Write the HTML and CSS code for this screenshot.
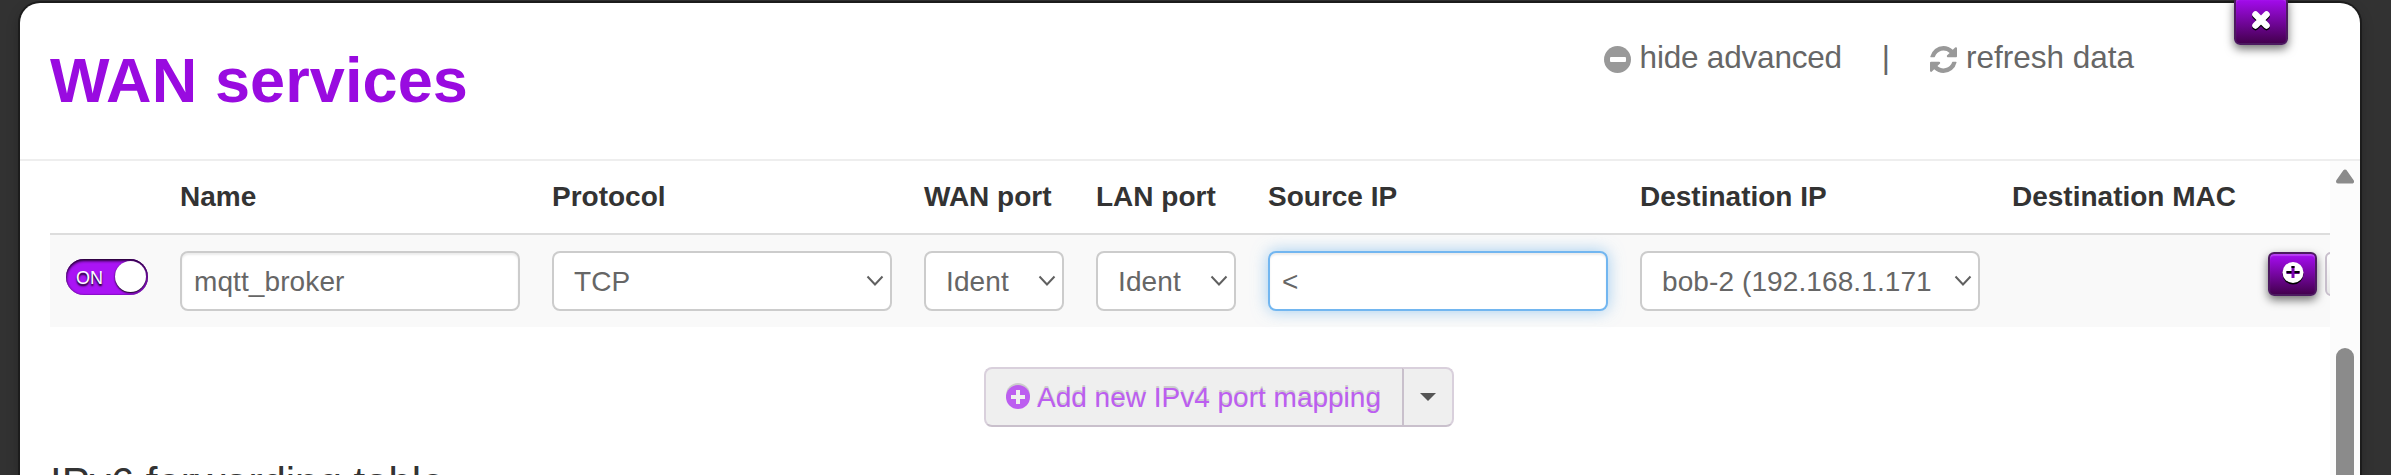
FILE: index.html
```html
<!DOCTYPE html>
<html lang="en">
<head>
<meta charset="utf-8">
<title>WAN services</title>
<link rel="stylesheet" href="styles.css">
</head>
<body>
<svg class="defs" aria-hidden="true">
  <symbol id="chevron" viewBox="0 0 18 12"><path d="M1.5 1.500 9 9.500 16.500 1.500" fill="none" stroke="#606060" stroke-width="2"/></symbol>
  <symbol id="minus" viewBox="0 0 27 27"><circle cx="13.5" cy="13.5" r="13.5" fill="#999"/><rect x="6" y="11" width="16" height="5" rx="1" fill="#fff"/></symbol>
  <symbol id="refresh" viewBox="0 0 1536 1536"><path fill="#999" d="M1511 928q0 5-1 7-64 268-268 434.500T764 1536q-146 0-282.500-55T238 1324l-129 129q-19 19-45 19t-45-19-19-45V960q0-26 19-45t45-19h448q26 0 45 19t19 45-19 45l-137 137q71 66 161 102t187 36q134 0 250-65t186-179q11-17 53-117 8-23 30-23h192q13 0 22.500 9.500t9.500 22.500zm25-800v448q0 26-19 45t-45 19h-448q-26 0-45-19t-19-45 19-45l138-138Q969 256 768 256q-134 0-250 65T332 500q-11 17-53 117-8 23-30 23H50q-13 0-22.500-9.500T18 608v-7q65-268 270-434.500T768 0q146 0 284 55.500T1297 212l130-129q19-19 45-19t45 19 19 45z"/></symbol>
</svg>
<main class="panel">
  <header class="panel-head">
    <h1 class="title">WAN services</h1>
    <div class="actions">
      <a class="action hide"><svg class="action-icon"><use href="#minus"/></svg>hide advanced</a>
      <span class="separator">|</span>
      <a class="action"><svg class="action-icon"><use href="#refresh"/></svg>refresh data</a>
    </div>
    <button class="purple close" aria-label="Close"><svg class="close-icon" viewBox="0 0 20 20"><path d="M4.500 5.500 15.500 16.500M15.500 5.500 4.500 16.500" stroke="#000"/><path d="M4.500 4 15.500 15M15.500 4 4.500 15" stroke="#fff"/></svg></button>
  </header>
  <div class="body">
    <div class="content">
      <div class="row row-head">
        <span></span><span>Name</span><span>Protocol</span><span>WAN port</span><span>LAN port</span><span>Source IP</span><span>Destination IP</span><span>Destination MAC</span>
      </div>
      <div class="row row-data">
        <div class="toggle"><span class="toggle-text">ON</span><span class="knob"></span></div>
        <div class="field input">mqtt_broker</div>
        <div class="field select"><span>TCP</span><svg class="chevron"><use href="#chevron"/></svg></div>
        <div class="field select"><span>Ident</span><svg class="chevron"><use href="#chevron"/></svg></div>
        <div class="field select"><span>Ident</span><svg class="chevron"><use href="#chevron"/></svg></div>
        <div class="field input focused">&lt;</div>
        <div class="field select"><span>bob-2 (192.168.1.171</span><svg class="chevron"><use href="#chevron"/></svg></div>
        <span></span>
        <div class="row-buttons">
          <button class="purple add" aria-label="Add"><svg class="add-icon" viewBox="0 0 22 23"><circle cx="11" cy="12" r="10.500" fill="#000"/><circle cx="11" cy="10.500" r="10.500" fill="#fff"/><path d="M4.500 9H9.500V4H12.500V9H17.500V12H12.500V16H9.500V12H4.500Z" fill="#7a06b0"/><path d="M4.500 9H9.500V11.200H4.500ZM12.500 9H17.500V11.200H12.500ZM9.500 4H12.500V6H9.500Z" fill="#000"/></svg></button>
          <button class="plain" aria-label="More"></button>
        </div>
      </div>
      <div class="mapping">
        <button class="mapping-main"><svg class="mapping-icon" viewBox="0 0 24 26"><circle cx="12" cy="12" r="12" fill="#ccc"/><circle cx="12" cy="14" r="12" fill="#bc5ef0"/><path d="M5 12H10V7H14V12H19V16H14V21H10V16H5Z" fill="#efefef"/></svg>Add new IPv4 port mapping</button>
        <button class="mapping-drop" aria-label="Options"><span class="caret"></span></button>
      </div>
      <h2 class="subtitle">IPv6 forwarding table</h2>
    </div>
    <div class="scrollbar">
      <svg class="scroll-up" viewBox="0 0 18 14"><path d="M9 2 16 12H2Z" fill="#8b8b8b" stroke="#8b8b8b" stroke-width="4" stroke-linejoin="round"/></svg>
      <div class="thumb"></div>
    </div>
  </div>
</main>
</body>
</html>
```
FILE: styles.css
```css
* { box-sizing: border-box; }
body {
  margin: 0;
  height: 475px;
  overflow: hidden;
  padding: 3px 31px 0 20px;
  background: #323232;
  font: 28px/40px "Liberation Sans", Arial, sans-serif;
  color: #333;
}
button { font: inherit; margin: 0; padding: 0; }
h1, h2 { margin: 0; }
.defs { position: absolute; width: 0; height: 0; }
.panel {
  height: 472px;
  overflow: clip;
  overflow-clip-margin: 10px;
  background: #fff;
  border-radius: 20px 20px 0 0;
  box-shadow: 0 0 0 2px #1c1c1c, 0 6px 14px rgba(0,0,0,.3);
}
.panel-head {
  position: relative;
  height: 158px;
  padding: 0 226px 0 30px;
  border-bottom: 2px solid #eee;
  display: flex;
  justify-content: space-between;
  align-items: flex-start;
}
.title {
  margin-top: 37px;
  font-size: 63px;
  line-height: 80px;
  letter-spacing: .1px;
  color: #990be0;
}
.actions {
  display: flex;
  margin-top: 34px;
  font-size: 31.500px;
  color: #666;
}
.action { display: flex; }
.hide { letter-spacing: -.2px; }
.action-icon { width: 27px; height: 27px; margin: 9px 9px 0 0; }
.separator { width: 88px; text-align: center; }
.purple {
  border: 2px solid #4c1a60;
  border-radius: 6px;
  background: linear-gradient(#a70cf3, #44004f);
  box-shadow: 0 4px 10px rgba(0,0,0,.55), inset 0 2px 1px rgba(255,255,255,.22);
  display: flex;
  justify-content: center;
}
.close {
  position: absolute;
  right: 72px;
  top: -7px;
  width: 54px;
  height: 49px;
}
.close-icon { width: 20px; height: 21px; margin-top: 12px; fill: none; stroke-width: 6.500; stroke-linecap: round; }
.body { display: flex; height: 314px; padding-left: 30px; }
.content { flex: 1; min-width: 0; overflow: hidden; }
.row {
  display: grid;
  grid-template-columns: 98px 340px 340px 140px 140px 340px 340px 226px auto;
  column-gap: 32px;
}
.row-head { height: 72px; padding-top: 16px; font-weight: bold; }
.row-head span:first-child, .toggle { margin-left: 16px; }
.row-data {
  height: 94px;
  padding-top: 16px;
  border-top: 2px solid #ddd;
  background: #f9f9f9;
}
.toggle {
  display: flex;
  width: 82px;
  height: 36px;
  margin-top: 8px;
  padding: 2px;
  justify-content: space-between;
  border-radius: 18px;
  background: #aa14f5;
  box-shadow: inset 0 2px 3px #22002f, inset 0 0 2px #52007a;
}
.toggle-text { margin-left: 8px; font-size: 18px; line-height: 34px; color: #fff; text-shadow: 0 2px 2px #000; }
.knob { width: 31px; height: 31px; border-radius: 50%; background: #fff; box-shadow: 0 1px 2px #000; }
.field {
  height: 60px;
  border: 2px solid #ccc;
  border-radius: 8px;
  background: #fff;
  color: #666;
  line-height: 58px;
  letter-spacing: .1px;
  white-space: nowrap;
}
.input { padding-left: 12px; box-shadow: inset 0 2px 2px rgba(0,0,0,.075); }
.focused { border-color: #72b6f0; box-shadow: inset 0 2px 2px rgba(0,0,0,.075), 0 0 16px rgba(102,175,233,.6); }
.select { display: flex; justify-content: space-between; padding: 0 6px 0 20px; }
.chevron { width: 18px; height: 12px; margin-top: 22px; }
.row-buttons { display: flex; gap: 8px; margin-left: -2px; }
.add { flex: none; width: 49px; height: 44px; margin-top: 1px; }
.add-icon { width: 22px; height: 23px; margin-top: 8px; }
.plain { flex: none; width: 50px; height: 44px; margin-top: 1px; border: 2px solid #c8bfcc; border-radius: 6px; background: linear-gradient(#fff, #e8e8e8); }
.mapping { display: flex; width: 470px; height: 60px; margin: 40px 0 0 934px; }
.mapping-main, .mapping-drop {
  border: 2px solid #d9d0dc;
  border-bottom-color: #c9c0cc;
  background: #efefef;
  display: flex;
  align-items: flex-start;
}
.mapping-main {
  width: 418px;
  padding-left: 20px;
  border-right: 0;
  border-radius: 8px 0 0 8px;
  color: #bc5ef0;
  line-height: 58px;
  text-shadow: 0 -2px 0 #ccc;
  white-space: nowrap;
}
.mapping-icon { width: 24px; height: 26px; margin: 14px 7px 0 0; }
.mapping-drop { width: 52px; border-left-color: #c9c0cc; border-radius: 0 8px 8px 0; }
.caret { margin: 24px 0 0 16px; border: 8px solid transparent; border-top-color: #555; border-bottom: 0; }
.subtitle { margin-top: 32px; font-size: 42px; font-weight: normal; line-height: 48px; }
.scrollbar { width: 30px; padding: 8px 6px 0; background: #fcfcfc; }
.scroll-up { display: block; width: 18px; height: 15px; }
.thumb { width: 18px; height: 127px; margin-top: 164px; border-radius: 9px 9px 0 0; background: #8b8b8b; }
```
